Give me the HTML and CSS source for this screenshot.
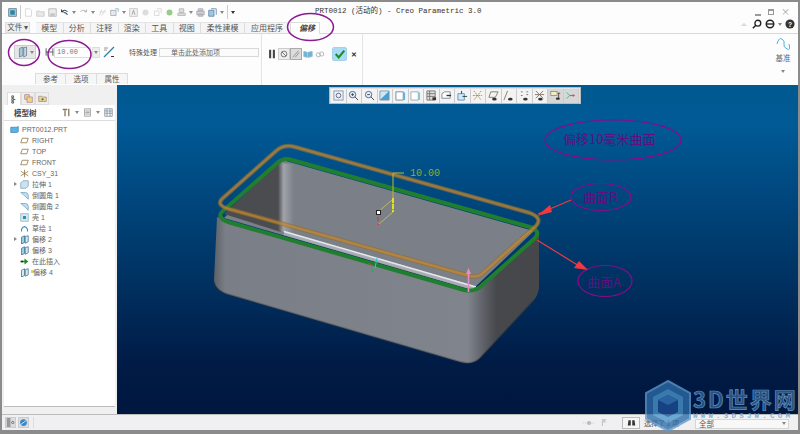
FILE: index.html
```html
<!DOCTYPE html>
<html lang="zh">
<head>
<meta charset="utf-8">
<title>PRT0012</title>
<link rel="stylesheet" href="styles.css">
</head>
<body>
<div class="window">
  <header class="titlebar">
    <div class="qat">
      <svg class="ico" viewBox="0 0 12 12"><rect x="1" y="1" width="10" height="10" fill="#bcd" stroke="#567"/><rect x="3" y="3" width="6" height="6" fill="#28a"/></svg>
      <i class="sep"></i>
      <svg class="ico dim-i" viewBox="0 0 12 12"><path d="M2 1h6l2 2v8H2z" fill="#fff" stroke="#bbb"/></svg>
      <svg class="ico dim-i" viewBox="0 0 12 12"><path d="M1 4h4l1 1h5v6H1z" fill="#ddd" stroke="#aaa"/></svg>
      <svg class="ico dim-i" viewBox="0 0 12 12"><path d="M1 1h10v10H1z" fill="#e4e4e4" stroke="#888"/><rect x="3" y="7" width="6" height="4" fill="#aaa"/></svg>
      <svg class="ico" viewBox="0 0 12 12"><path d="M2 5q4-4 8 0M2 2v3h3M10 9q-2-3-5-3" fill="none" stroke="#345" stroke-width="1.4"/></svg>
      <i class="caret"></i>
      <svg class="ico dim-i" viewBox="0 0 12 12"><path d="M10 5q-4-4-8 0M10 2v3H7" fill="none" stroke="#999" stroke-width="1.4"/></svg>
      <i class="caret"></i>
      <svg class="ico dim-i" viewBox="0 0 12 12"><path d="M2 10l3-8M5 10l5-8M2 5h8" stroke="#bbb" fill="none"/></svg>
      <svg class="ico dim-i" viewBox="0 0 12 12"><rect x="1" y="3" width="7" height="7" fill="#dde" stroke="#678"/><path d="M7 1h4v4" fill="none" stroke="#28a"/></svg>
      <i class="caret"></i>
      <svg class="ico dim-i" viewBox="0 0 12 12"><rect x="1" y="1" width="10" height="10" fill="#eee" stroke="#999"/><path d="M4 9l2-6 2 6" fill="none" stroke="#456"/></svg>
      <svg class="ico dim-i" viewBox="0 0 12 12"><circle cx="6" cy="6" r="4" fill="#ccc"/></svg>
      <svg class="ico dim-i" viewBox="0 0 12 12"><path d="M2 4h6v6H2zM5 1h6v6" fill="none" stroke="#bbb"/></svg>
      <svg class="ico" viewBox="0 0 12 12"><circle cx="6" cy="6" r="4" fill="#9c8"/></svg>
      <svg class="ico dim-i" viewBox="0 0 12 12"><path d="M3 1h6v5H3zM1 7h10v3H1z" fill="#ccc" stroke="#888"/></svg>
      <i class="caret"></i>
      <svg class="ico dim-i" viewBox="0 0 12 12"><path d="M3 1h6v3H3zM1 4h10v5H1zM3 8h6v3H3z" fill="#bbb" stroke="#778"/></svg>
      <svg class="ico" viewBox="0 0 12 12"><path d="M1 3h7v8H1z" fill="#9cd" stroke="#57a"/><path d="M4 1h7v8" fill="none" stroke="#57a"/></svg>
      <i class="caret"></i>
      <i class="sep"></i>
      <i class="caret dark"></i>
    </div>
    <h1 class="title">PRT0012 (活动的) - Creo Parametric 3.0</h1>
    <div class="winctl">
      <span class="wmin"></span><span class="wmax"></span><span class="wclose">×</span>
    </div>
  </header>

  <nav class="tabs">
    <span class="tab-file">文件 ▾</span>
    <span class="tab">模型</span><span class="tab">分析</span><span class="tab">注释</span><span class="tab">渲染</span><span class="tab">工具</span><span class="tab">视图</span><span class="tab">柔性建模</span><span class="tab">应用程序</span>
    <span class="tab-active">偏移</span>
    <div class="help">
      <svg class="ico tiny" viewBox="0 0 12 12"><path d="M1 9l5-5 5 5z" fill="#ddd"/></svg>
      <svg class="ico" viewBox="0 0 12 12"><circle cx="7" cy="5" r="3.5" fill="none" stroke="#222" stroke-width="1.6"/><path d="M4 8l-3 3" stroke="#222" stroke-width="1.8"/></svg>
      <svg class="ico" viewBox="0 0 12 12"><circle cx="6" cy="6" r="4.5" fill="none" stroke="#222" stroke-width="1.8"/><path d="M2 6h8" stroke="#222" stroke-width="1.6"/></svg>
      <i class="caret"></i>
      <svg class="ico" viewBox="0 0 12 12"><circle cx="6" cy="6" r="5.500" fill="#333"/><text x="6" y="9" class="q">?</text></svg>
    </div>
  </nav>

  <section class="ribbon">
    <div class="rib-main">
      <div class="rib-row">
        <span class="splitbtn">
          <svg class="ico-l" viewBox="0 0 14 16"><path d="M2 3l5-2v12l-5 2z" fill="#a9c6dc" stroke="#5b7387"/><path d="M8 2l4-1v12l-4 2z" fill="#c9d6e0" stroke="#5b7387"/></svg>
          <i class="caret"></i>
        </span>
        <svg class="dim-icon" viewBox="0 0 12 12"><path d="M1.500 1v10M10.500 1v10M1 6h10" stroke="#333" fill="none"/></svg>
        <span class="numfield">10.00</span>
        <span class="spin"><i class="caret"></i></span>
        <svg class="ico flip" viewBox="0 0 12 12"><path d="M1 11L11 1" stroke="#2a7fa8" stroke-width="1.3"/><path d="M1 2h4M1 4h3" stroke="#999"/><path d="M8 10h3v1H8z" fill="#333"/></svg>
        <span class="lbl">特殊处理</span>
        <span class="collector">单击此处添加项</span>
      </div>
      <div class="subtabs"><span class="subtab">参考</span><span class="subtab">选项</span><span class="subtab">属性</span></div>
    </div>
    <div class="rib-ctl">
      <svg class="ico" viewBox="0 0 12 12"><path d="M2.500 1h2.500v10h-2.500zM7 1h2.500v10H7z" fill="#444"/></svg>
      <svg class="ico boxed" viewBox="0 0 12 12"><circle cx="6" cy="6" r="3.500" fill="none" stroke="#666"/><path d="M3.500 3.500l5 5" stroke="#666"/></svg>
      <svg class="ico pressed" viewBox="0 0 12 12"><path d="M2 10L9 2M5 10l5-6" stroke="#888" fill="none"/></svg>
      <svg class="ico" viewBox="0 0 12 12"><path d="M1 3l4 1v6L1 9zM6 4l5-1v6l-5 1z" fill="#6ab4dc" stroke="#8bc"/></svg>
      <svg class="ico" viewBox="0 0 12 12"><circle cx="4" cy="7" r="2.500" fill="none" stroke="#aaa"/><circle cx="8" cy="6" r="2.500" fill="none" stroke="#aaa"/></svg>
      <span class="okbtn"><svg viewBox="0 0 14 14"><path d="M2 7l3.500 4L12 3" fill="none" stroke="#1e8a28" stroke-width="2.400"/></svg></span>
      <span class="cancel">✕</span>
    </div>
    <div class="rib-fill"></div>
    <div class="rib-datum">
      <svg class="ico-d" viewBox="0 0 14 14"><path d="M1 7q2-7 5-5t2 5 3 5 2-5" fill="none" stroke="#49b2e0" stroke-width="1"/></svg>
      <span>基准</span>
      <i class="caret"></i>
    </div>
  </section>

  <div class="main">
    <aside class="sidebar">
      <div class="side-tabs">
        <span class="side-tab on"><svg viewBox="0 0 10 10"><path d="M2 1h2v2H2zM2 4h2v2H2zM2 7h2v2H2zM4 5h2" fill="none" stroke="#555"/></svg></span>
        <span class="side-tab"><svg viewBox="0 0 12 12"><rect x="1" y="1" width="6" height="6" fill="#f1d48c" stroke="#a88"/><rect x="4" y="4" width="7" height="7" fill="#f1d48c" stroke="#a88"/></svg></span>
        <span class="side-tab"><svg viewBox="0 0 12 12"><path d="M1 3h4l1 1h5v6H1z" fill="#f1d48c" stroke="#a88"/><circle cx="6" cy="7" r="1.500" fill="#285"/></svg></span>
      </div>
      <div class="side-head">
        <span class="side-title">模型树</span>
        <svg class="ico" viewBox="0 0 12 12"><path d="M1 1h6v2H1z" fill="#875"/><path d="M3 3h2v8H3zM8 1h2v10H8z" fill="#987"/></svg>
        <i class="caret"></i>
        <svg class="ico" viewBox="0 0 12 12"><path d="M2 1h8v10H2z" fill="#eee" stroke="#999"/><path d="M3 4h6M3 6h6M3 8h6" stroke="#999"/></svg>
        <i class="caret"></i>
        <svg class="ico" viewBox="0 0 12 12"><path d="M1 1h10v10H1zM1 4h10M1 7h10M4 1v10M8 1v10" fill="none" stroke="#789"/></svg>
      </div>
      <ul class="tree">
        <li class="root"><svg viewBox="0 0 12 12"><path d="M1 3h8l2-1v7l-2 1H1z" fill="#5ab3e4" stroke="#3a87b8"/></svg>PRT0012.PRT</li>
        <li><svg viewBox="0 0 12 12"><path d="M3 3h8L9 9H1z" fill="none" stroke="#8a6d3b"/></svg>RIGHT</li>
        <li><svg viewBox="0 0 12 12"><path d="M3 3h8L9 9H1z" fill="none" stroke="#8a6d3b"/></svg>TOP</li>
        <li><svg viewBox="0 0 12 12"><path d="M3 3h8L9 9H1z" fill="none" stroke="#8a6d3b"/></svg>FRONT</li>
        <li><svg viewBox="0 0 12 12"><path d="M6 1v10M1 3l10 6M11 3L1 9" stroke="#8a6d3b" fill="none"/></svg>CSY_31</li>
        <li class="exp"><svg viewBox="0 0 12 12"><path d="M1 4l3-3h7v7l-3 3H1z" fill="#cfe3ef" stroke="#6ea1c0"/></svg>拉伸 1</li>
        <li><svg viewBox="0 0 12 12"><path d="M1 2h6q4 0 4 4v5L7 7z" fill="#bfe0f2" stroke="#6ea1c0"/></svg>倒圆角 1</li>
        <li><svg viewBox="0 0 12 12"><path d="M1 2h6q4 0 4 4v5L7 7z" fill="#bfe0f2" stroke="#6ea1c0"/></svg>倒圆角 2</li>
        <li><svg viewBox="0 0 12 12"><rect x="1" y="1" width="10" height="10" fill="#d3e6f2" stroke="#8bb"/><rect x="4" y="4" width="4" height="4" fill="#3a87b8"/></svg>壳 1</li>
        <li><svg viewBox="0 0 12 12"><path d="M2 10V7q4-7 8 0v3" fill="none" stroke="#3a87b8" stroke-width="1.400"/></svg>草绘 1</li>
        <li class="exp"><svg viewBox="0 0 12 12"><path d="M2 3l4-2v9l-4 2z" fill="#9fcde8" stroke="#3a6f90"/><path d="M7 2l4-1v8l-4 2z" fill="#dce9f1" stroke="#3a6f90"/></svg>偏移 2</li>
        <li><svg viewBox="0 0 12 12"><path d="M2 3l4-2v9l-4 2z" fill="#9fcde8" stroke="#3a6f90"/><path d="M7 2l4-1v8l-4 2z" fill="#dce9f1" stroke="#3a6f90"/></svg>偏移 3</li>
        <li><svg viewBox="0 0 12 12"><path d="M1 5h5V2l5 4-5 4V7H1z" fill="#1d8a1d"/><path d="M1 5h3v2H1z" fill="#222"/></svg>在此插入</li>
        <li><svg viewBox="0 0 12 12"><path d="M2 3l4-2v9l-4 2z" fill="#dce9f1" stroke="#3a6f90"/><path d="M7 2l4-1v8l-4 2z" fill="#dce9f1" stroke="#3a6f90"/></svg><b class="star"></b>偏移 4</li>
      </ul>
    </aside>

    <main class="viewport">
      <div class="viewbar">
        <span class="vb"><svg viewBox="0 0 12 12"><rect x="1" y="1" width="10" height="10" fill="#eef" stroke="#89a"/><circle cx="6" cy="6" r="2.500" fill="none" stroke="#567"/></svg></span>
        <span class="vb"><svg viewBox="0 0 12 12"><circle cx="5" cy="5" r="3.500" fill="#dfefff" stroke="#567"/><path d="M7.500 7.500L11 11M3.500 5h3M5 3.500v3" stroke="#345"/></svg></span>
        <span class="vb"><svg viewBox="0 0 12 12"><circle cx="5" cy="5" r="3.500" fill="#dfefff" stroke="#567"/><path d="M7.500 7.500L11 11M3.500 5h3" stroke="#345"/></svg></span>
        <span class="vb"><svg viewBox="0 0 12 12"><path d="M1 1h10v10H1z" fill="#cfe6f5" stroke="#89a"/><path d="M1 11L11 1V11z" fill="#4a9fd0"/></svg></span>
        <span class="vb"><svg viewBox="0 0 12 12"><path d="M1 2h8v9H1z" fill="#fff" stroke="#789"/><path d="M9 2l2 1v8H9z" fill="#5ab3e4"/></svg></span>
        <span class="vb"><svg viewBox="0 0 12 12"><path d="M1 2h8v9H1z" fill="#fff" stroke="#9ab"/><path d="M9 2l2 1v8H9z" fill="#8cc"/></svg></span>
        <span class="vb"><svg viewBox="0 0 12 12"><path d="M1 1h9v10H1z" fill="#ddd" stroke="#777"/><path d="M1 4h9M1 7h9M4 1v10" stroke="#777"/><rect x="7" y="8" width="4" height="3" fill="#333"/></svg></span>
        <span class="vb"><svg viewBox="0 0 12 12"><path d="M1 4l3-2h6v7H1z" fill="#fff" stroke="#789"/><path d="M6 6h5" stroke="#333" stroke-width="1.500"/></svg></span>
        <span class="vb"><svg viewBox="0 0 12 12"><path d="M1 4h7v7H1z" fill="#cfeaff" stroke="#59b"/><path d="M6 7h5M5 1v3" stroke="#333"/></svg></span>
        <span class="vb"><svg viewBox="0 0 12 12"><path d="M2 1l8 10M10 1L2 11M1 6h10" stroke="#a98a50" fill="none" stroke-dasharray="2 1"/></svg></span>
        <span class="vb"><svg viewBox="0 0 12 12"><path d="M3 2h8L8 8H1z" fill="none" stroke="#876"/><ellipse cx="7" cy="10" rx="2.500" ry="1.500" fill="#333"/></svg></span>
        <span class="vb"><svg viewBox="0 0 12 12"><path d="M5 1L1 11" stroke="#876"/><ellipse cx="8" cy="10" rx="2.500" ry="1.500" fill="#333"/></svg></span>
        <span class="vb"><svg viewBox="0 0 12 12"><path d="M2 2h2M8 2h2M2 6h2M8 5h2" stroke="#876"/><ellipse cx="7" cy="10" rx="2.500" ry="1.500" fill="#333"/></svg></span>
        <span class="vb"><svg viewBox="0 0 12 12"><path d="M2 1l8 8M10 1L2 9M1 5h10" stroke="#876" fill="none"/><ellipse cx="7" cy="10" rx="2.500" ry="1.500" fill="#333"/></svg></span>
        <span class="vb on"><svg viewBox="0 0 14 12"><rect x="1" y="1" width="8" height="5" fill="#f6ecc4" stroke="#887"/><path d="M10 3h3M11 3v7" stroke="#333"/><ellipse cx="10" cy="10" rx="2.500" ry="1.500" fill="#333"/></svg></span>
        <span class="vb on"><svg viewBox="0 0 14 12"><path d="M2 2l4 4-4 4" fill="none" stroke="#3a8"/><path d="M6 6h5" stroke="#d55" stroke-width="1.500"/><path d="M10 4l3 2-3 2z" fill="#d55"/></svg></span>
      </div>

      <svg class="scene" viewBox="117 85 683 329">
        <defs>
          <linearGradient id="front" gradientUnits="userSpaceOnUse" x1="214" y1="0" x2="539" y2="0">
            <stop offset="0" stop-color="#5d6067"/><stop offset=".035" stop-color="#7a7e86"/><stop offset=".78" stop-color="#80848c"/><stop offset=".835" stop-color="#5a5d63"/><stop offset=".87" stop-color="#46484c"/><stop offset="1" stop-color="#45474b"/>
          </linearGradient>
          <linearGradient id="inner" gradientUnits="userSpaceOnUse" x1="278" y1="0" x2="294" y2="0">
            <stop offset="0" stop-color="#4a4c50"/><stop offset=".35" stop-color="#a0a3a9"/><stop offset="1" stop-color="#7b7f87"/>
          </linearGradient>
        </defs>

        <!-- body -->
        <path class="body-side" d="M217 217L472 292L539 232V288Q538 295 534 300L482 356Q474 366 460 362L230 295Q215 291 214 280Z"/>
        <path class="body-edge" d="M214 282Q215 291 230 295L460 362Q474 366 482 356L534 300"/>
        <!-- interior -->
        <path class="interior" d="M282 160L534 231L472 290L224 218Z"/>
        <path class="interior-dark" d="M281 160L224 214L281 232Z"/>
        <path class="interior-fade" d="M278 163L294 164V234L278 231Z"/>
        <path class="highlight-soft" d="M284 233L474 288"/>
        <path class="highlight" d="M284 231.500L476 287"/>
        <!-- green rim -->
        <path class="rim" d="M276 164Q283 157 292 160L530 227Q542 231 534 239L480 287Q474 292 464 290L228 222Q215 217 224 210Z"/>
        <!-- offset surface -->
        <path class="offset-edge" d="M276 151Q284 144 295 147L530 213Q543 218 536 226L484 272Q479 278 470 276L229 209Q215 205 223 198Z"/>
        <path class="offset-fill" d="M276 151Q284 144 295 147L530 213Q543 218 536 226L484 272Q479 278 470 276L229 209Q215 205 223 198Z"/>
        <!-- dimension -->
        <path class="dim-line" d="M393 212V173H404"/>
        <path class="dim-thin" d="M392 200L378 212M393 212L379 224"/>
        <path class="dim-hl" d="M393 198V212"/>
        <rect class="handle" x="376.500" y="210.500" width="4" height="4"/>
        <path class="tick" d="M378 217v4M379 224l-1 1"/>
        <text class="dim-text" x="410" y="176">10.00</text>
        <!-- triad -->
        <path class="triad-c" d="M377 258L375 268"/>
        <path class="triad-r" d="M368 263L374 266"/>
        <circle class="triad-g" cx="372.500" cy="270.500" r="1.500"/>
        <!-- pink arrow -->
        <path class="pink" d="M468.500 292V272"/>
        <path class="pink-h" d="M466 274H471L468.500 268Z"/>
        <!-- annotations -->
        <ellipse class="note" cx="613" cy="140" rx="68" ry="20"/>
        <text class="note-t" x="563" y="144">偏移10毫米曲面</text>
        <ellipse class="note" cx="601" cy="197" rx="30" ry="13.500"/>
        <text class="note-t" x="583" y="202">曲面B</text>
        <ellipse class="note" cx="605" cy="281" rx="27" ry="15.500"/>
        <text class="note-t" x="587" y="287">曲面A</text>
        <path class="arrow-l" d="M571 200L538 214"/>
        <path class="arrow-h" d="M537 216L550 205L552 212Z"/>
        <path class="arrow-l" d="M537 240L584 269"/>
        <path class="arrow-h" d="M588 270L574 268L579 261Z"/>
      </svg>
    </main>
  </div>

  <footer class="statusbar">
    <span class="st-btn"><svg viewBox="0 0 12 12"><rect x="1" y="0" width="5" height="12" fill="#999"/><circle cx="9" cy="6" r="1.500" fill="none" stroke="#555"/></svg></span>
    <span class="st-btn"><svg viewBox="0 0 12 12"><circle cx="6" cy="6" r="4.500" fill="#3a87c8"/><path d="M2 9L10 3" stroke="#fff"/></svg></span>
    <i class="st-sep"></i>
    <span class="st-fill"></span>
    <svg class="st-dot" viewBox="0 0 20 10"><path d="M1 5h18" stroke="#ccc" stroke-dasharray="2 1"/><circle cx="10" cy="5" r="3" fill="#bbb"/></svg>
    <svg class="st-flag" viewBox="0 0 10 12"><path d="M2 1v10" stroke="#aaa"/><path d="M2 1h6L6 4l2 2H2z" fill="#ccc"/></svg>
    <span class="st-find"><svg viewBox="0 0 12 12"><path d="M2 3h3v7H1zM7 3h3l1 7H7z" fill="#333"/></svg></span>
    <span class="st-sel">选择了 1 项</span>
    <span class="st-filter">全部<i class="caret"></i></span>
  </footer>

  <svg class="marks" viewBox="0 0 800 434">
    <ellipse class="mark" cx="24" cy="52.500" rx="15.500" ry="13"/>
    <ellipse class="mark" cx="69.500" cy="54.500" rx="21.500" ry="14"/>
    <ellipse class="mark" cx="310.500" cy="27" rx="23" ry="13.500"/>
  </svg>

  <div class="watermark">
    <svg class="wm-logo" viewBox="0 0 46 52">
      <path d="M23 1L45 13V39L23 51L1 39V13Z" fill="#2c6ca8" stroke="#5f9acb" stroke-width="2"/>
      <path d="M23 9L38 17V35L23 43L8 35V17Z" fill="#5db0e2" opacity=".6"/>
      <path d="M23 15L33 20V32L23 37L13 32V20Z" fill="#1d4f94"/>
      <path d="M23 15L33 20L23 25L13 20Z" fill="#3877bd"/>
    </svg>
    <div class="wm-text"><span class="wm-big">3D世界网</span><span class="wm-url">WWW.3DSJW.COM</span></div>
  </div>
</div>
</body>
</html>
```

FILE: styles.css
```css
* { box-sizing: border-box; }
html, body { margin: 0; padding: 0; height: 100%; }
body { background: #8b8b8b; font-family: "Noto Sans CJK SC", "Liberation Sans", sans-serif; color: #555; overflow: hidden; }
.window { position: relative; width: 800px; height: 434px; padding: 2px 2px 4px 2px; display: flex; flex-direction: column; background: #8b8b8b; }
svg { display: block; flex: none; }
.ico { width: 10px; height: 10px; }
.caret { display: inline-block; width: 0; height: 0; border-left: 2.5px solid transparent; border-right: 2.5px solid transparent; border-top: 3px solid #888; flex: none; }
.caret.dark { border-top-color: #333; }
.sep { width: 1px; height: 14px; background: #ccc; flex: none; }
.dim-i { opacity: .65; }

.titlebar { height: 20px; background: #fdfdfd; display: flex; align-items: center; position: relative; padding: 0 6px; flex: none; }
.qat { display: flex; align-items: center; gap: 3px; }
.qat .ico { width: 9px; height: 9px; }
.title { position: absolute; left: 313px; top: 2px; margin: 0; font: 400 7.500px/14px "Liberation Mono", "Noto Sans CJK SC", monospace; color: #333; white-space: nowrap; }
.winctl { margin-left: auto; display: flex; gap: 7px; align-items: center; padding-right: 2px; }
.wmin { width: 6px; height: 2px; background: #999; margin-top: 5px; }
.wmax { width: 6px; height: 6px; border: 1px solid #999; border-top-width: 2px; }
.wclose { font-size: 9px; line-height: 8px; color: #999; }

.tabs { flex: none; height: 11px; background: #fdfdfd; display: flex; align-items: stretch; position: relative; font-size: 8px; line-height: 9px; color: #555; padding-left: 3px; }
.tab-file { width: 25px; background: #f0f0f0; border: 1px solid #ddd; text-align: center; margin-right: 6px; white-space: nowrap; font-size: 7.500px; line-height: 8px; }
.tab { border-right: 1px solid #ddd; background: #f5f5f5; white-space: nowrap; width: 27.500px; display: flex; align-items: center; justify-content: center; border-top: 1px solid #e5e5e5; flex: none; padding-bottom: 1px; }
.tab:nth-of-type(8), .tab:nth-of-type(9) { width: 44px; }
.tab:nth-of-type(9) { border-right: 0; }
.tab-active { width: 30px; margin-left: 1px; padding-left: 4px; background: #fff; text-align: center; font-style: italic; font-weight: 700; color: #444; border: 1px solid #ddd; border-bottom: 0; height: 12px; z-index: 1; white-space: nowrap; }
.help { position: absolute; right: 3px; top: -3px; display: flex; align-items: center; gap: 3px; }
.help .tiny { width: 8px; height: 8px; margin-right: 1px; }
.help .q { font: 700 8px "Liberation Sans", sans-serif; fill: #fff; text-anchor: middle; }

.ribbon { flex: none; height: 52px; background: #fdfdfd; border-top: 1px solid #d9d9d9; display: flex; }
.rib-main { width: 260px; border-right: 1px solid #e3e3e3; display: flex; flex-direction: column; }
.rib-row { height: 36px; display: flex; align-items: center; padding-left: 12px; margin-top: 0; }
.splitbtn { width: 22px; height: 14px; background: #e6e6e6; border: 1px solid #ccc; display: flex; align-items: center; gap: 2px; padding-left: 3px; }
.ico-l { width: 10px; height: 12px; }
.dim-icon { margin-left: 9px; width: 9px; height: 10px; }
.numfield { width: 37px; height: 11px; background: #fff; border: 1px solid #ddd; font: 7px/9px "Liberation Mono", monospace; padding-left: 2px; color: #777; }
.spin { width: 8px; height: 11px; background: #eee; border: 1px solid #ddd; display: flex; align-items: center; justify-content: center; margin-left: 1px; }
.flip { margin-left: 3px; width: 12px; height: 12px; }
.lbl { font-size: 7px; margin-left: 14px; width: 30px; white-space: nowrap; color: #555; }
.collector { width: 100px; height: 9px; border: 1px solid #d8d8d8; background: #fbfbfb; font-size: 7px; line-height: 7px; padding-left: 11px; color: #666; white-space: nowrap; }
.subtabs { display: flex; margin-left: 33px; height: 11px; margin-top: 3px; }
.subtab { width: 31px; text-align: center; font-size: 7.500px; line-height: 10px; border: 1px solid #ddd; border-left-width: 0; border-bottom: 0; background: #f6f6f6; color: #555; }
.subtab:first-child { border-left-width: 1px; }
.rib-ctl { width: 101px; border-right: 1px solid #e3e3e3; display: flex; align-items: flex-start; padding: 15px 0 0 5px; gap: 2px; }
.boxed { background: #eee; outline: 1px solid #ccc; }
.pressed { background: #dcdcdc; outline: 1px solid #aaa; }
.okbtn { width: 15px; height: 14px; background: #a8dcf4; border: 1px solid #a2d2ec; margin: -2px 0 0 5px; border-radius: 2px; }
.okbtn svg { width: 12px; height: 12px; margin: 0 auto; }
.cancel { font-size: 7px; line-height: 10px; color: #333; font-weight: 700; margin-left: 2px; }
.rib-fill { flex: 1; }
.rib-datum { width: 28px; display: flex; flex-direction: column; align-items: center; font-size: 7.500px; line-height: 12px; color: #666; padding-top: 3px; padding-right: 2px; }
.ico-d { width: 14px; height: 14px; margin-bottom: 1px; }
.rib-datum .caret { margin-top: 6px; }

.main { flex: 1; min-height: 0; display: flex; }
.sidebar { width: 115px; flex: none; background: #f0f0f0; padding: 7px 2px 7px 2px; display: flex; flex-direction: column; }
.side-tabs { display: flex; height: 13px; padding-left: 3px; flex: none; }
.side-tab { width: 14px; height: 13px; background: #eee; border: 1px solid #ddd; display: flex; align-items: center; justify-content: center; }
.side-tab.on { background: #fff; border-bottom: 0; }
.side-tab svg { width: 9px; height: 9px; }
.side-head { background: #fff; display: flex; align-items: center; gap: 4px; padding: 0 1px 0 10px; flex: none; height: 15px; }
.side-head .ico { width: 9px; height: 9px; }
.side-title { font-size: 7.500px; font-weight: 700; color: #444; width: 44px; white-space: nowrap; }
.tree { flex: 1; list-style: none; margin: 0; padding: 3px 0 0 0; background: #fff; border-top: 1px solid #ddd; border-bottom: 1px solid #bbb; }
.tree li { height: 11px; display: flex; align-items: center; font-size: 7px; line-height: 11px; color: #666; padding-left: 16px; position: relative; white-space: nowrap; font-family: "Liberation Sans", "Noto Sans CJK SC", sans-serif; }
.tree li svg { width: 9px; height: 9px; margin-right: 3px; }
.tree li.root { padding-left: 6px; }
.tree li.root svg { margin-right: 3px; }
.tree li.exp::before { content: ""; position: absolute; left: 10px; top: 3px; border-left: 3px solid #888; border-top: 2.500px solid transparent; border-bottom: 2.500px solid transparent; }
.star { display: inline-block; width: 3px; height: 3px; background: #e8d44d; margin: 0 -1px 2px -1px; flex: none; }

.viewport { flex: 1; position: relative; overflow: hidden; background: linear-gradient(#00598f, #005a96 12%, #001b45 85%, #00173f); }
.viewbar { position: absolute; left: 212px; top: 2px; height: 17px; display: flex; align-items: center; background: #e3e3e3; border: 1px solid #bbb; padding: 0 1px; z-index: 1; }
.vb { width: 15.500px; height: 14px; display: flex; align-items: center; justify-content: center; border-right: 1px solid #ccc; background: #f3f3f3; }
.vb.on { background: #d7d7d7; }
.vb svg { width: 11px; height: 11px; }
.scene { position: absolute; inset: 0; width: 683px; height: 329px; }
.body-side { fill: url(#front); }
.body-edge { fill: none; stroke: #2f3136; stroke-width: 2; opacity: .35; }
.interior { fill: #7b7f87; }
.interior-dark { fill: #4a4c50; }
.interior-fade { fill: url(#inner); }
.highlight { stroke: #e4e8ee; stroke-width: 1.500; fill: none; }
.highlight-soft { stroke: #a8abb2; stroke-width: 4; fill: none; }
.rim { fill: none; stroke: #1f7f2e; stroke-width: 4; stroke-linejoin: round; }
.offset-edge { fill: none; stroke: #8f7034; stroke-width: 4.500; opacity: .6; }
.offset-fill { fill: none; stroke: #e8962a; stroke-width: 2.500; opacity: .45; }
.dim-line { fill: none; stroke: #b8c02c; stroke-width: 1; }
.dim-thin { fill: none; stroke: #c9c55a; stroke-width: .8; }
.dim-hl { stroke: #f0f01e; stroke-width: 1.600; fill: none; stroke-dasharray: 5 1; }
.handle { fill: #fff; stroke: #222; stroke-width: 1; }
.tick { stroke: #c5344a; fill: none; }
.dim-text { font: 10px "Liberation Mono", monospace; fill: #9aa43e; }
.triad-c { stroke: #2fc9c9; fill: none; }
.triad-r { stroke: #b04848; fill: none; }
.triad-g { fill: #25b24a; }
.pink { stroke: #e88ac4; stroke-width: 1.600; fill: none; }
.pink-h { fill: #ef8ac6; }
.note { fill: none; stroke: #8a0a8a; stroke-width: 1.200; }
.note-t { font: 13px "Noto Sans CJK SC", "Liberation Sans", sans-serif; fill: #5e1080; }
.arrow-l { stroke: #f2383f; stroke-width: 1.200; fill: none; }
.arrow-h { fill: #f2383f; }

.marks { position: absolute; inset: 0; width: 800px; height: 434px; pointer-events: none; z-index: 3; }
.mark { fill: none; stroke: #8c1a90; stroke-width: 1.500; }

.watermark { position: absolute; left: 645px; top: 380px; display: flex; gap: 2px; align-items: flex-start; opacity: .78; z-index: 4; }
.wm-logo { width: 46px; height: 52px; }
.wm-text { display: flex; flex-direction: column; margin-top: 7px; }
.wm-big { font: 700 22px/22px "Noto Sans CJK SC", sans-serif; letter-spacing: 2px; color: #2f6299; white-space: nowrap; -webkit-text-stroke: .7px #7fb4dc; }
.wm-url { font: 700 7.500px/8px "Liberation Mono", monospace; color: #62a4d6; letter-spacing: 3.200px; white-space: nowrap; margin-top: 3px; }

.statusbar { flex: none; height: 16px; background: #f0f0f2; border-top: 1px solid #bdbdbd; display: flex; align-items: center; padding-left: 3px; font-size: 7.500px; color: #555; position: relative; z-index: 2; }
.st-btn { width: 11px; height: 11px; background: #ddd; border: 1px solid #ccc; margin-right: 2px; display: flex; align-items: center; justify-content: center; }
.st-btn svg { width: 9px; height: 9px; }
.st-sep { width: 1px; height: 11px; background: #ddd; margin-left: 2px; }
.st-fill { flex: 1; }
.st-dot { width: 14px; height: 8px; margin-right: 5px; }
.st-flag { width: 7px; height: 9px; margin-right: 14px; }
.st-find { width: 18px; height: 12px; background: #f5f5f5; border: 1px solid #bbb; display: flex; align-items: center; justify-content: center; margin-right: 4px; }
.st-find svg { width: 9px; height: 9px; }
.st-sel { width: 51px; white-space: nowrap; font-size: 7px; }
.st-filter { width: 94px; height: 10px; margin-top: 2px; margin-right: 9px; background: #f8f8f8; border: 1px solid #d5d5d5; line-height: 8px; padding-left: 3px; display: flex; justify-content: space-between; align-items: center; padding-right: 2px; }
```
